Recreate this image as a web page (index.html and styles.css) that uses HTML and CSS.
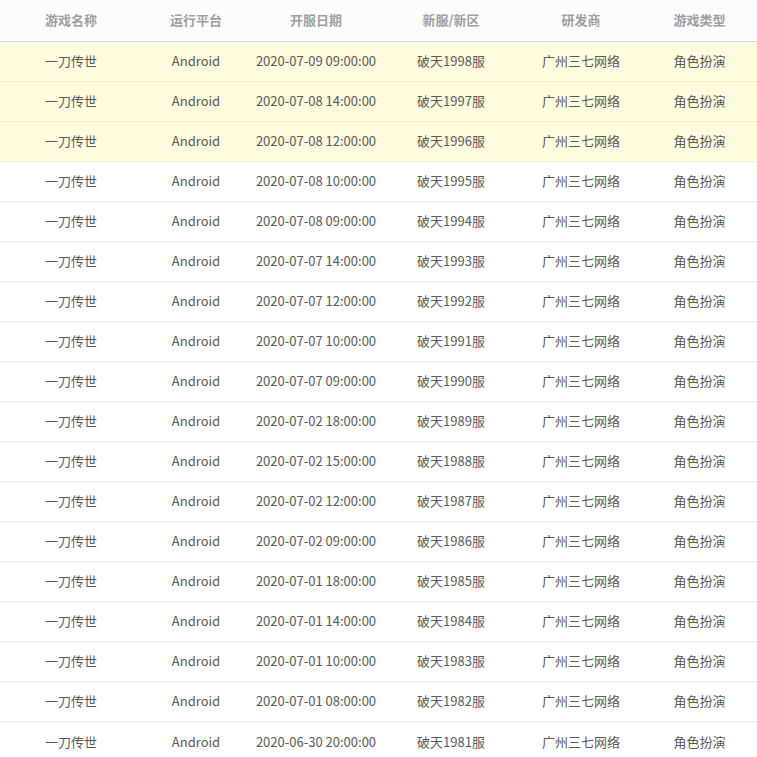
FILE: index.html
```html
<!DOCTYPE html>
<html lang="zh">
<head>
<meta charset="utf-8">
<link rel="stylesheet" href="styles.css">
</head>
<body>
<div class="table">
  <div class="row head">
    <div>游戏名称</div><div>运行平台</div><div>开服日期</div><div>新服/新区</div><div>研发商</div><div>游戏类型</div>
  </div>
  <div class="row hl"><div>一刀传世</div><div>Android</div><div>2020-07-09 09:00:00</div><div>破天1998服</div><div>广州三七网络</div><div>角色扮演</div></div>
  <div class="row hl"><div>一刀传世</div><div>Android</div><div>2020-07-08 14:00:00</div><div>破天1997服</div><div>广州三七网络</div><div>角色扮演</div></div>
  <div class="row hl"><div>一刀传世</div><div>Android</div><div>2020-07-08 12:00:00</div><div>破天1996服</div><div>广州三七网络</div><div>角色扮演</div></div>
  <div class="row"><div>一刀传世</div><div>Android</div><div>2020-07-08 10:00:00</div><div>破天1995服</div><div>广州三七网络</div><div>角色扮演</div></div>
  <div class="row"><div>一刀传世</div><div>Android</div><div>2020-07-08 09:00:00</div><div>破天1994服</div><div>广州三七网络</div><div>角色扮演</div></div>
  <div class="row"><div>一刀传世</div><div>Android</div><div>2020-07-07 14:00:00</div><div>破天1993服</div><div>广州三七网络</div><div>角色扮演</div></div>
  <div class="row"><div>一刀传世</div><div>Android</div><div>2020-07-07 12:00:00</div><div>破天1992服</div><div>广州三七网络</div><div>角色扮演</div></div>
  <div class="row"><div>一刀传世</div><div>Android</div><div>2020-07-07 10:00:00</div><div>破天1991服</div><div>广州三七网络</div><div>角色扮演</div></div>
  <div class="row"><div>一刀传世</div><div>Android</div><div>2020-07-07 09:00:00</div><div>破天1990服</div><div>广州三七网络</div><div>角色扮演</div></div>
  <div class="row"><div>一刀传世</div><div>Android</div><div>2020-07-02 18:00:00</div><div>破天1989服</div><div>广州三七网络</div><div>角色扮演</div></div>
  <div class="row"><div>一刀传世</div><div>Android</div><div>2020-07-02 15:00:00</div><div>破天1988服</div><div>广州三七网络</div><div>角色扮演</div></div>
  <div class="row"><div>一刀传世</div><div>Android</div><div>2020-07-02 12:00:00</div><div>破天1987服</div><div>广州三七网络</div><div>角色扮演</div></div>
  <div class="row"><div>一刀传世</div><div>Android</div><div>2020-07-02 09:00:00</div><div>破天1986服</div><div>广州三七网络</div><div>角色扮演</div></div>
  <div class="row"><div>一刀传世</div><div>Android</div><div>2020-07-01 18:00:00</div><div>破天1985服</div><div>广州三七网络</div><div>角色扮演</div></div>
  <div class="row"><div>一刀传世</div><div>Android</div><div>2020-07-01 14:00:00</div><div>破天1984服</div><div>广州三七网络</div><div>角色扮演</div></div>
  <div class="row"><div>一刀传世</div><div>Android</div><div>2020-07-01 10:00:00</div><div>破天1983服</div><div>广州三七网络</div><div>角色扮演</div></div>
  <div class="row"><div>一刀传世</div><div>Android</div><div>2020-07-01 08:00:00</div><div>破天1982服</div><div>广州三七网络</div><div>角色扮演</div></div>
  <div class="row last"><div>一刀传世</div><div>Android</div><div>2020-06-30 20:00:00</div><div>破天1981服</div><div>广州三七网络</div><div>角色扮演</div></div>
</div>
</body>
</html>
```
FILE: styles.css
```css
html, body {
  margin: 0;
  padding: 0;
  background: #ffffff;
}
.table {
  width: 757px;
  font-family: "Noto Sans CJK SC", "Noto Sans", sans-serif;
  font-size: 13px;
  color: #5a5a5a;
}
.row {
  display: grid;
  grid-template-columns: 142px 108px 132px 138px 122px 115px;
  box-sizing: border-box;
  height: 40px;
  padding-bottom: 2px;
  align-items: center;
  text-align: center;
  border-bottom: 1px solid #ebebeb;
  white-space: nowrap;
}
.row.head {
  height: 42px;
  background: #fcfcfc;
  color: #a0a0a0;
  font-weight: bold;
  border-bottom: 1px solid #dedbcf;
}
.row.hl {
  background: #fefbdf;
  border-bottom-color: #f3eecb;
}
.row.last {
  border-bottom: none;
}
```
